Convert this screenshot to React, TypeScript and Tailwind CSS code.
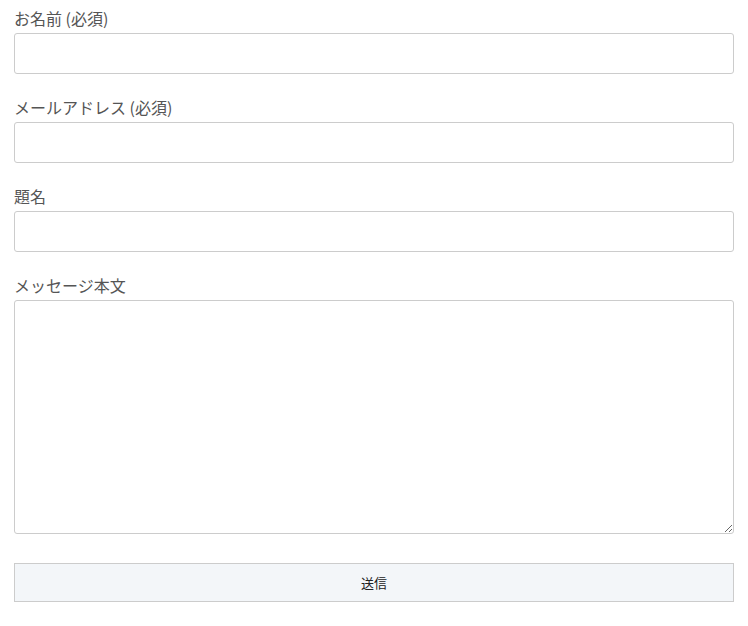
import React from "react";

const fields = [
  { label: "お名前 (必須)", type: "text" },
  { label: "メールアドレス (必須)", type: "email" },
  { label: "題名", type: "text" },
];

const App = () => {
  return (
    <div
      className="w-[748px] h-[626px] bg-white px-[14px] pt-[6px]"
      style={{ fontFamily: '"Noto Sans CJK JP", "Noto Sans", sans-serif' }}
    >
      <form action="">
        {fields.map((item) => (
          <div className="mb-[21px]" key={item.label}>
            <label className="block text-[16px] leading-6 text-[#555] mb-[3px]">
              {item.label}
            </label>
            <input
              type={item.type}
              className="block w-full h-[41px] border border-[#ccc] rounded-[3px] bg-white px-2 focus:outline-none"
            />
          </div>
        ))}
        <div>
          <label className="block text-[16px] leading-6 text-[#555] mb-[3px]">
            メッセージ本文
          </label>
          <textarea className="block w-full h-[234px] border border-[#ccc] rounded-[3px] bg-white px-2 focus:outline-none" />
        </div>
        <button
          type="button"
          className="block w-full h-[39px] mt-[29px] border border-[#ccc] bg-[#f3f6f9] text-[13px] text-[#222]"
        >
          送信
        </button>
      </form>
    </div>
  );
};

export default App;
